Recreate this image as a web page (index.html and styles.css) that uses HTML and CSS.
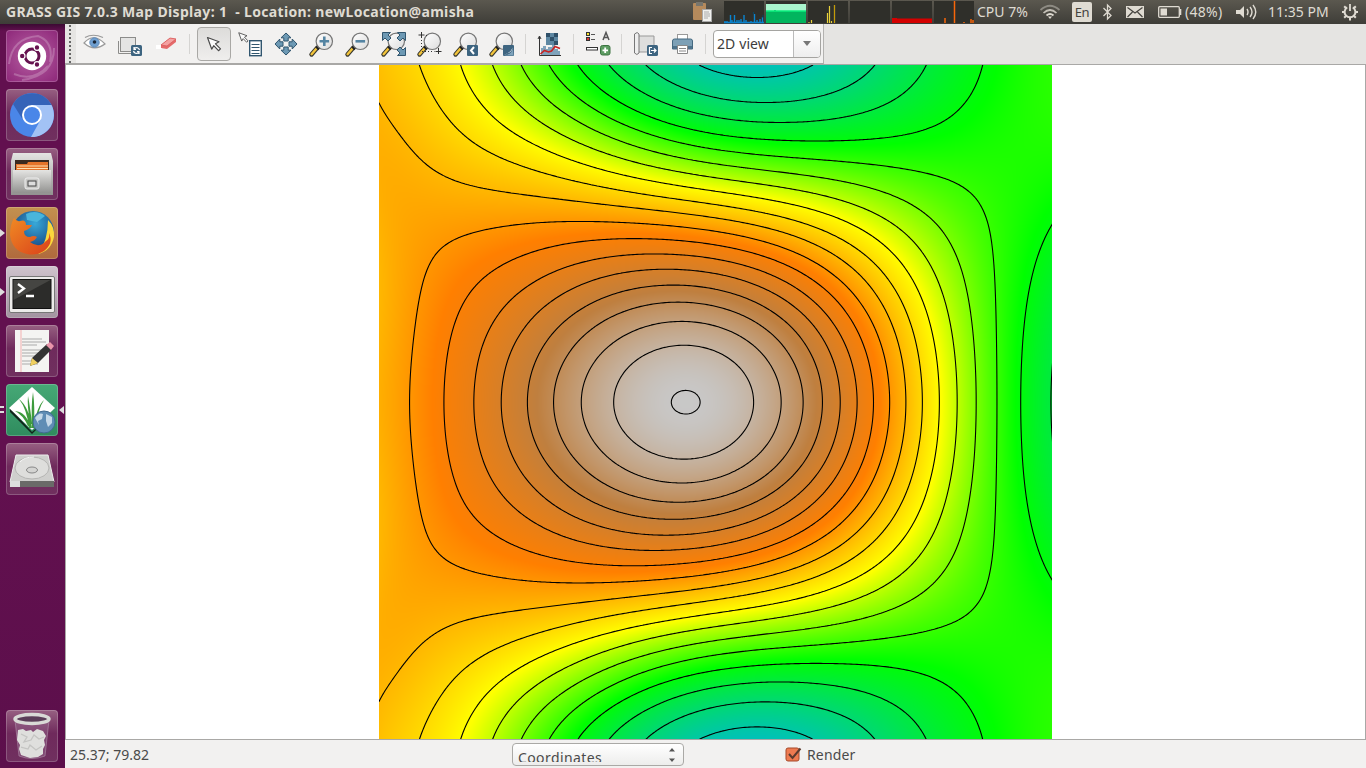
FILE: index.html
```html
<!DOCTYPE html>
<html lang="en">
<head>
<meta charset="utf-8">
<title>GRASS GIS 7.0.3 Map Display: 1</title>
<link rel="stylesheet" href="styles.css">
</head>
<body>
<svg width="0" height="0" class="defs">
  <defs>
    <linearGradient id="lens" x1="0" y1="0" x2="1" y2="1"><stop offset="0" stop-color="#fff"/><stop offset="1" stop-color="#dcdcdc"/></linearGradient>
    <linearGradient id="metal" x1="0" y1="0" x2="0" y2="1"><stop offset="0" stop-color="#e4e4e2"/><stop offset="1" stop-color="#929290"/></linearGradient>
    <radialGradient id="globe" cx=".55" cy=".3" r=".7"><stop offset="0" stop-color="#38a8d8"/><stop offset="1" stop-color="#123a78"/></radialGradient>
    <linearGradient id="fox" x1="0" y1="0" x2="1" y2="1"><stop offset="0" stop-color="#f08a24"/><stop offset="1" stop-color="#d9401a"/></linearGradient>
    <g id="mag">
      <path d="M13.5 21.5 L7.5 28.5" stroke="#3a3a30" stroke-width="4.4" stroke-linecap="round"/>
      <path d="M12.5 22.5 L7.6 28.2" stroke="#f3c43a" stroke-width="2.4" stroke-linecap="round"/>
      <path d="M12.8 22.8 L15.2 20.4" stroke="#222" stroke-width="4"/>
      <circle cx="20.3" cy="15.3" r="8.2" fill="url(#lens)" stroke="#777" stroke-width="1.2"/>
    </g>
    <path id="arr" d="M1 1 L12.5 5.2 L9 7.3 L14 12.4 L12 14.2 L7.2 9.2 L5.2 12.6 Z" fill="#fbfbfb" stroke="#4a4a4a" stroke-width="1.2" stroke-linejoin="round"/>
    <path id="up" d="M0 -11 L5 -6.2 H2.2 V-3 H-2.2 V-6.2 H-5 Z" fill="#6d99b4" stroke="#31566f" stroke-width="1"/>
  </defs>
</svg>

<header class="panel">
  <span class="title">GRASS GIS 7.0.3 Map Display: 1&nbsp; - Location: newLocation@amisha</span>
  <div class="tray">
    <svg class="clip" width="22" height="24"><rect x="0" y="3" width="13" height="17" rx="1" fill="#b58a5c"/><rect x="3" y="2" width="7" height="4" fill="#77756d"/><rect x="9.500" y="9.500" width="9" height="12" fill="#f1f1ee" stroke="#aaa"/><path d="M11 12h5M11 14h6M11 16h6M11 18h4" stroke="#aaa"/></svg>
    <svg class="graphs" width="250" height="24">
      <path d="M0 1h40v22h-40zM42 1h40v22h-40zM84 1h40v22h-40zM126 1h40v22h-40zM168 1h40v22h-40zM210 1h40v22h-40z" fill="#2f2f2a"/>
      <path d="M0 22.5h40M1 23v-2M3 23v-2M6.500 23v-8M10.500 23v-8M8 23v-3M13 23v-3M15 23v-3M17 23v-4M20 23v-8M22 23v-3M27 23v-2M30.500 23v-9M33 23v-3M36 23v-4M38.500 23v-6" stroke="#0a84cf" stroke-width="1.400"/>
      <path d="M29.500 12v2M39 15v3" stroke="#0b4560"/>
      <rect x="42" y="4" width="40" height="19" fill="#a9f5cd"/><path d="M42 11h8v-1h2v1h30v12h-40z" fill="#02b55e"/><path d="M42 11h40" stroke="#0cf07f" stroke-width="1.500"/>
      <path d="M85 23v-1M87.500 23v-3M103.500 23v-10M105.500 23v-17M107.500 23v-2M110.500 23v-18" stroke="#e8d23c" stroke-width="1.200"/><path d="M110.500 23v-18" stroke="#c49a08"/>
      <path d="M168 18h5v.6h35v4.400h-40z" fill="#d40000"/>
      <path d="M221 23v-5M230.500 23v-22M240 23v-1M247 23v-4M249 23v-3" stroke="#f7660a" stroke-width="1.500"/>
    </svg>
    <span class="cpu">CPU 7%</span>
    <svg class="wifi" width="22" height="24" fill="none" stroke-width="1.700"><path d="M1.500 10 Q11 1.500 20.500 10" stroke="#8e8b83"/><path d="M4.500 13 Q11 7 17.500 13" stroke="#c4c0b7"/><path d="M7.500 15.500 Q11 12.500 14.500 15.500" stroke="#dfdbd2"/><path d="M9 16.500h4l-2 2.500z" fill="#dfdbd2"/></svg>
    <span class="lang">En</span>
    <svg class="bt" width="12" height="24" fill="none" stroke="#dfdbd2" stroke-width="1.300"><path d="M1.500 8 L9 15.500 L5.500 19 V5 L9 8.500 L1.500 16"/></svg>
    <svg class="mail" width="18" height="24"><rect y="6" width="18" height="12" fill="#dfdbd2"/><path d="M1.500 7.500 L9 13 L16.500 7.500M1.500 17l5-5M16.500 17l-5-5" fill="none" stroke="#45433e" stroke-width="1.200"/></svg>
    <svg class="batt" width="25" height="24"><rect x=".7" y="6.700" width="20.600" height="10.600" rx="1" fill="none" stroke="#dfdbd2" stroke-width="1.300"/><rect x="2.500" y="8.500" width="6.500" height="7" fill="#dfdbd2"/><path d="M22.500 9v6" stroke="#dfdbd2" stroke-width="1.600"/></svg>
    <span class="pct">(48%)</span>
    <svg class="vol" width="21" height="24"><path d="M0 10h4l4-4v12l-4-4h-4z" fill="#dfdbd2"/><path d="M11 9q2 3 0 6M14 7q4 5 0 10M17 5q5.500 7 0 14" fill="none" stroke="#dfdbd2" stroke-width="1.400"/></svg>
    <span class="time">11:35 PM</span>
    <svg class="gear" width="18" height="24"><g fill="none" stroke="#dfdbd2"><path d="M6.200 7.300a5.400 5.400 0 1 0 5.600 0" stroke-width="2"/><path d="M9 4v7" stroke-width="1.800"/><path d="M9 17v3.500M1 12h3M14 12h3M3.200 17.800l2-2M14.800 17.800l-2-2M3.200 6.200l2 2M14.800 6.200l-2 2" stroke-width="2"/></g></svg>
  </div>
</header>

<div class="desktop">
  <nav class="launcher">
    <div class="tile dash"><svg viewBox="0 0 52 52"><path d="M3 34Q6 8 32 6Q48 12 44 32M8 44Q28 52 42 36M16 50Q48 46 48 18" fill="none" stroke="#fff" stroke-opacity=".22" stroke-width="2"/><circle cx="26" cy="26" r="14.200" fill="#fff"/><circle cx="26" cy="26" r="7" fill="none" stroke="#65124f" stroke-width="3"/><g fill="#65124f" stroke="#fff" stroke-width="1.200"><circle cx="16.200" cy="26" r="2.800"/><circle cx="31" cy="17.500" r="2.800"/><circle cx="31" cy="34.500" r="2.800"/></g></svg></div>
    <div class="tile glass"><svg viewBox="0 0 52 52"><circle cx="26" cy="26" r="22" fill="#4a86e8"/><path d="M7 15A22 22 0 0 1 45.500 16H26L17 31Z" fill="#3563b8"/><path d="M26 16h19.500A22 22 0 0 1 25 48L35 30Z" fill="#a2c2f5"/><circle cx="26" cy="26" r="10" fill="#fff"/><circle cx="26" cy="26" r="8" fill="#4a86e8"/></svg></div>
    <div class="tile glass"><svg viewBox="0 0 52 52"><path d="M7 5h38l2 8v34H5V13Z" fill="url(#metal)"/><path d="M9 12h34v11H9z" fill="#3b2a20"/><path d="M10 16h11l1-2h20v9H10z" fill="#e5742a"/><path d="M11 18h31M11 20.500h31" stroke="#ffe0b0" stroke-width="1.200"/><path d="M7 22h38v23H7z" fill="url(#metal)"/><rect x="19" y="30" width="14" height="11" rx="2" fill="#c9c9c7" stroke="#eee"/><rect x="22" y="33" width="8" height="5" fill="#ddd" stroke="#444"/></svg></div>
    <div class="tile firefox"><i class="run"></i><svg viewBox="0 0 52 52"><circle cx="27" cy="25" r="21" fill="url(#globe)"/><path d="M20 7Q30 2 39 9L31 15L21 13Z" fill="#49b5dc"/><path d="M42 13Q49 20 48 30Q45 44 32 47Q42 34 42 13Z" fill="#fbd83c"/><path d="M8 11Q11 15 14 14Q20 12 20 18L26 18Q24 22 18 24Q18 30 24 30Q28 28 31 30Q29 34 24 35Q33 42 40 34Q44 32 43 26Q48 36 38 44Q30 49 21 47Q6 44 4 28Q4 18 8 11Z" fill="url(#fox)"/></svg></div>
    <div class="tile term"><i class="run"></i><svg viewBox="0 0 52 52"><rect x="3.500" y="10.500" width="45" height="36" rx="1.500" fill="#ecebea" stroke="#777"/><rect x="7" y="13.500" width="38" height="29" fill="#2c2c2a" stroke="#111"/><path d="M7.500 14h37L7.500 34z" fill="#454542"/><path d="M12 18l6 4.500-6 4.500M20 30h8" fill="none" stroke="#fff" stroke-width="2.300"/></svg></div>
    <div class="tile glass"><svg viewBox="0 0 52 52"><path d="M9 5h34v42H9z" fill="#f4f4f2"/><path d="M15 5v42" stroke="#f3b0b0"/><path d="M16 14h20M16 17h24M16 20h15M16 25h22M16 28h18M16 31h20M16 36h14M16 39h16" stroke="#aaa"/><path d="M24 41l2-8 15-14 5 5-14 14z" fill="#333"/><path d="M24 41l2-8 6 5z" fill="#f0d060"/><path d="M40 20l4-3 4 4-3 4z" fill="#e995ab"/></svg></div>
    <div class="tile grass"><i class="run two"></i><i class="focus"></i><svg viewBox="0 0 52 52"><path d="M4 24l22 24 18-16-18 18L4 28z" fill="#10251b"/><path d="M26 3L49 24 26 46 3 24z" fill="#fff"/><path d="M26 44Q25 20 27 8Q29 22 28 44ZM23 44Q21 25 13 15Q23 23 26 44ZM28 42Q31 22 38 16Q32 25 30 42ZM22 42Q17 31 9 27Q20 28 24 42ZM24 40Q21 20 22 12Q24 22 26 40Z" fill="#3d9b3c"/><circle cx="38" cy="38" r="11" fill="#5f8db5" stroke="#406b90"/><path d="M29 34q4-6 8-4l-1 5-4 2 1 4zM40 30l6 3v6l-4 4-2-6z" fill="#c4d8e8"/></svg></div>
    <div class="tile glass"><svg viewBox="0 0 52 52"><path d="M10 12h32l6 27H4z" fill="#cfcfcd" stroke="#eee"/><ellipse cx="26" cy="25" rx="17" ry="11" fill="#dededc" stroke="#b5b5b3"/><path d="M14 19q4-5 14-5" fill="none" stroke="#f5f5f5"/><ellipse cx="26" cy="27" rx="5.500" ry="3" fill="#d4d4d2" stroke="#888"/><path d="M4 38h44v6H4z" fill="#6a6a68"/><path d="M4 38h10v6H4z" fill="#ddd"/></svg></div>
    <div class="tile glass trash"><svg viewBox="0 0 52 52"><path d="M9 10h34l-4 36q-13 5-26 0z" fill="#a987a5" fill-opacity=".3" stroke="#b9a0b6" stroke-opacity=".5"/><path d="M12 20l5-1 3 2 5-1 2 2 4-3 6 2 3 5-2 4 1 5-2 4v5l-5 3-8 1-9-3-2-6 1-4-3-5z" fill="#dfdfdd"/><path d="M15 24l6 3-3 5 7-2 3-5 5 4 5-2M15 37l7 2 2-4 6 5 6-4" fill="none" stroke="#c4c4c2" stroke-width="1.300"/><ellipse cx="26" cy="9" rx="17" ry="4.500" fill="#5b3e58" stroke="#d9dad6" stroke-width="3.500"/></svg></div>
  </nav>

  <main class="window">
    <div class="toolrow">
      <div class="toolbar">
        <span class="grip"></span>
        <svg class="tool"><path d="M8 17Q18 6 29 18Q18 26 8 17Z" fill="#fff" stroke="#9a9a9a" stroke-width="1.200"/><path d="M9 11.500Q17 7 27 11.500" fill="none" stroke="#999" stroke-width="1.200"/><circle cx="18.500" cy="16.500" r="4.700" fill="#6f9fd0" stroke="#5c88b8"/><circle cx="18.500" cy="16" r="1.800" fill="#1b2738"/></svg>
        <svg class="tool"><rect x="8.500" y="11.500" width="15" height="14" fill="#e4e4e3" stroke="#8c8c8a"/><path d="M6.500 15v12.500H20" fill="none" stroke="#8c8c8a"/><rect x="19" y="19" width="11" height="11" rx="1.500" fill="#3d6480"/><path d="M21.500 25a3 3 0 0 0 5 1.500M27.500 24a3 3 0 0 0-5-1.500M22 21v2.500h2M27 28v-2.500h-2" fill="none" stroke="#fff" stroke-width="1.200"/></svg>
        <svg class="tool"><path d="M8 19h6v4h-6z" fill="#fff"/><path d="M13 19l9-7 6 1v3l-9 7-6-1z" fill="#e56a6a"/><path d="M13 19l9-7 6 1-9 7z" fill="#f4a1a1" stroke="#d95b5b" stroke-width=".8"/></svg>
        <i class="sep"></i>
        <span class="tool pressed"><svg class="tool"><use href="#arr" x="10.500" y="10.500"/></svg></span>
        <svg class="tool"><use href="#arr" transform="translate(6 6) scale(.72)"/><rect x="17.700" y="14.700" width="11.600" height="15" fill="#fff" stroke="#31566f" stroke-width="1.400"/><path d="M19.500 18.500h8M19.500 21.500h8M19.500 24.500h8M19.500 27.500h8" stroke="#31566f"/></svg>
        <svg class="tool"><g transform="translate(18 18)"><use href="#up"/><use href="#up" transform="rotate(90)"/><use href="#up" transform="rotate(180)"/><use href="#up" transform="rotate(270)"/></g></svg>
        <svg class="tool"><use href="#mag"/><path d="M20.300 10.500v9.600M15.500 15.300h9.600" stroke="#5484a2" stroke-width="2.600"/></svg>
        <svg class="tool"><use href="#mag"/><path d="M15.500 15.300h9.600" stroke="#5484a2" stroke-width="2.600"/></svg>
        <svg class="tool"><use href="#mag"/><g fill="#6d99b4" stroke="#31566f"><path d="M6.500 6.500h8l-2.500 2.500 3 3-3 3-3-3-2.500 2.500z"/><path d="M29.500 6.500h-8l2.500 2.500-3 3 3 3 3-3 2.500 2.500z"/><path d="M29.500 29.500v-8l-2.500 2.500-3-3-3 3 3 3-2.500 2.500z"/></g></svg>
        <svg class="tool"><use href="#mag"/><path d="M9.500 6v6M6.500 9h6M26.500 22v6M23.500 25.500h6" stroke="#333"/><path d="M9.500 14v11.500h13M14 9.500h3" fill="none" stroke="#333" stroke-dasharray="1 2"/></svg>
        <svg class="tool"><use href="#mag"/><rect x="19" y="19" width="11" height="11" rx="1" fill="#3d6480"/><path d="M26 21l-3 3.500 3 3.500" fill="none" stroke="#fff" stroke-width="2"/></svg>
        <svg class="tool"><use href="#mag"/><rect x="19" y="19" width="11" height="11" rx="1" fill="#3d6480"/><path d="M20 29.500q8-.5 9-8.500l.5 8.500z" fill="#7fa3bb"/><path d="M19.500 29q6-1 9-7-1 4-4 5z" fill="#fff"/></svg>
        <i class="sep"></i>
        <svg class="tool"><path d="M14 7h12v12h-12z" fill="#5d87a2"/><path d="M14 7h4v4h-4zM22 7h4v4h-4zM18 11h4v4h-4zM22 15h4v4h-4z" fill="#2f5069"/><path d="M9 29v-7h2v-2h3v3h2v-2h4v-2h3v4h3v2h2v4z" fill="#7fa3bb"/><path d="M7.500 11v18.500H29M6 13l1.500-3 1.500 3" fill="none" stroke="#333"/><path d="M8.500 28l4-3.500 4 1.500 3-1 3.500-4.500 5 2" fill="none" stroke="#c62323" stroke-width="1.600"/></svg>
        <i class="sep"></i>
        <svg class="tool"><rect x="6.500" y="6.500" width="3" height="3" fill="#f5e02a" stroke="#333"/><rect x="6.500" y="11.500" width="3" height="3" fill="#d33" stroke="#333"/><path d="M11 8.500h4M11 13.500h4" stroke="#555"/><path d="M23 14l3-7.500 3 7.500M24 11.500h4" fill="none" stroke="#555" stroke-width="1.500"/><rect x="6.500" y="21.500" width="11" height="2.500" fill="#fff" stroke="#333"/><rect x="20.500" y="19.500" width="9.500" height="9.500" rx="2" fill="#5d9c62" stroke="#3c7541"/><path d="M25.200 21.500v5.500M22.500 24.300h5.500" stroke="#fff" stroke-width="1.800"/></svg>
        <i class="sep"></i>
        <svg class="tool"><path d="M10 10h16v16H10z" fill="#dededd" stroke="#999"/><path d="M6.500 8q3-3 4.500 0v19q-2 3-4.500 0z" fill="#eee" stroke="#777"/><rect x="19" y="19" width="11" height="11" rx="1.500" fill="#3d6480"/><path d="M24 21.500h-2.500v6h2.500M23 24.500h5M26 22.500l2 2-2 2" fill="none" stroke="#fff" stroke-width="1.200"/></svg>
        <svg class="tool"><rect x="13.500" y="8.500" width="10" height="6" fill="#fff" stroke="#999"/><path d="M8.500 15q0-2 2-2h16q2 0 2 2v8h-20z" fill="#7da0b6" stroke="#446980"/><path d="M9 20h19v3h-19z" fill="#4d728b"/><path d="M13.500 19.500h10v8h-10z" fill="#fff" stroke="#888"/><path d="M15 22.500h7M15 25h7" stroke="#888"/></svg>
        <i class="sep last"></i>
        <div class="combo"><span>2D view</span><b></b></div>
      </div>
    </div>
    <div class="viewport"><canvas id="map" width="673" height="674"></canvas></div>
    <footer class="status">
      <span class="coords">25.37; 79.82</span>
      <div class="choice"><span>Coordinates</span><svg width="8" height="16"><path d="M1 4.500l3-3.500 3 3.500zM1 11.500l3 3.500 3-3.500z" fill="#555"/></svg></div>
      <label class="render"><svg width="17" height="16"><rect x="1" y="2" width="13" height="13" rx="2" fill="#ee7a50" stroke="#a5492a"/><path d="M4 8l3.500 4L15.500 2.500" fill="none" stroke="#5b3a2e" stroke-width="2"/></svg>Render</label>
    </footer>
  </main>
</div>
<script src="map.js"></script>
</body>
</html>
```

FILE: styles.css
```css
* { box-sizing: border-box; }
body { margin: 0; width: 1366px; height: 768px; overflow: hidden; display: flex; flex-direction: column; font-family: "Noto Sans", "Open Sans", sans-serif; font-size: 14px; color: #4a4a4a; background: #f2f1f0; }
.defs { position: absolute; }
svg { display: block; flex: none; }

.panel { height: 24px; flex: none; display: flex; justify-content: space-between; background: linear-gradient(#5b584f, #3e3d38); color: #dfdbd2; line-height: 23px; padding-left: 6px; white-space: nowrap; }
.title { font-weight: 700; font-size: 14px; letter-spacing: .34px; }
.tray { display: flex; width: 674px; flex: none; }
.clip { margin-left: 1px; }
.graphs { margin-left: 9px; }
.cpu { width: 51px; margin-left: 3px; }
.wifi { margin-left: 11px; }
.lang { margin: 2px 0 0 11px; width: 20px; height: 20px; border-radius: 2px; background: #dfdbd2; color: #45433e; text-align: center; line-height: 20px; font-size: 13px; letter-spacing: -.5px; }
.bt { margin-left: 10px; }
.mail { margin-left: 12px; }
.batt { margin-left: 14px; }
.pct { width: 39px; margin-left: 2px; }
.vol { margin-left: 12px; }
.time { width: 61px; margin-left: 11px; }
.gear { margin-left: 12px; }
.cpu, .pct, .time { font-size: 14px; letter-spacing: 0; }
.pct { letter-spacing: .3px; }

.desktop { flex: 1; display: flex; min-height: 0; }
.launcher { width: 65px; flex: none; display: flex; flex-direction: column; gap: 7px; padding: 6px 0 6px 6px; background: linear-gradient(#3c0a33, #62104f 7px, #62104f 60%, #5c0f4b); }
.tile { position: relative; width: 52px; height: 52px; border-radius: 4px; flex: none; box-shadow: inset 0 0 0 1px rgba(255,255,255,.2); }
.dash { background: radial-gradient(#b861a4, #8c2678); }
.glass { background: linear-gradient(#976082, #6f2a5c 45%, #70305f); }
.firefox { background: linear-gradient(#c4914f, #b06a3d); }
.term { background: linear-gradient(#cfc3cd, #a293a0); }
.grass { background: linear-gradient(#46a876, #2f8c5e); }
.trash { margin-top: auto; }
.run { position: absolute; left: -6px; top: 22px; border: 4px solid transparent; border-left: 5px solid #ddd; border-right: 0; }
.two { border: 0; border-top: 2px solid #ddd; border-bottom: 2px solid #ddd; width: 4px; height: 7px; }
.focus { position: absolute; left: 53px; top: 22px; border: 4px solid transparent; border-right: 5px solid #ddd; border-left: 0; }

.window { flex: 1; display: flex; flex-direction: column; min-width: 0; }
.toolrow { height: 41px; flex: none; display: flex; background: #e5e4e2; border-bottom: 1px solid #a9a8a6; }
.toolbar { display: flex; align-items: center; width: 759px; background: #f2f1f0; border-right: 1px solid #b3b2b0; border-bottom: 1px solid #a9a8a6; }
.grip { width: 11px; height: 39px; background: radial-gradient(circle, #666 .8px, transparent 1.2px) 3px 4px / 4px 4px repeat-y #e6e5e3; }
.tool { width: 36px; height: 36px; flex: none; }
.pressed { display: grid; place-items: center; position: relative; }
.pressed::before { content: ""; position: absolute; inset: 1px; border: 1px solid #a9a8a5; border-radius: 4px; background: linear-gradient(#dddcda, #efeeed); }
.pressed svg { position: relative; }
.sep { width: 1px; height: 20px; background: #d5d4d2; margin: 0 6px 0 5px; }
.last { margin-right: 7px; }
.combo { width: 108px; height: 28px; display: flex; border: 1px solid #a5a4a1; border-radius: 4px; background: #fff; color: #3c3c3c; line-height: 26px; }
.combo span { flex: 1; padding-left: 3px; letter-spacing: .1px; }
.combo b { width: 27px; border-left: 1px solid #bbb; border-radius: 0 3px 3px 0; background: linear-gradient(#fff, #eee); display: grid; place-items: center; }
.combo b::before { content: ""; border: 4px solid transparent; border-top: 5px solid #777; border-bottom: 0; }

.viewport { height: 674px; flex: none; background: #fff; display: flex; justify-content: center; border: 0 solid #a9a8a6; border-width: 0 1px; }
#map { display: block; }
.status { flex: 1; display: flex; border-top: 1px solid #a9a8a6; padding-left: 5px; line-height: 30px; }
.coords { width: 442px; }
.choice { width: 172px; height: 23px; margin-top: 3px; border: 1px solid #aaa9a6; border-radius: 4px; background: linear-gradient(#fff, #ededec); display: flex; justify-content: space-between; padding: 3px 7px 0 5px; overflow: hidden; }
.choice span { line-height: 22px; height: 15px; overflow: hidden; letter-spacing: .4px; }
.render { display: flex; margin-left: 101px; gap: 5px; letter-spacing: .15px; }
.render svg { margin-top: 6px; }
```

FILE: map.js
```js
// Elevation surface with contour lines, mirrored about the row AXIS.
// A smooth polynomial-cosine surface is fitted to points of known level.
const X0 = 379, Y0 = 65, W = 673, H = 674, AXIS = 402;

// Points on each contour level: [level, x, y, x, y, ...].
const control = [
  [0, 755,77.5, 692,65, 816,65, 715,73.3],
  [1, 763,101, 643.5,65, 876.5,65, 715,96.5],
  [2, 780,121, 608.5,65, 928,65, 715,115.7, 1051.8,370, 1051,402],
  [3, 811,140.4, 985.5,65, 972,92, 955,110, 932,123.3, 898,133.3, 858,138.3, 1052,225, 1040,250, 1030,283, 1023.3,337, 1021,402, 578,65, 603,90.7, 637,109, 677,123.3, 715,133.2],
  [4, 549,65, 715,149.3, 798,159, 898,167.3, 932,173.3, 955,182.7, 973.3,196.7, 985,216.7, 991.7,246.7, 995,290, 996.5,402],
  [5, 521,65, 715,164, 848,186, 882,194, 915,209, 941.7,231.7, 961.7,266.7, 971.7,313, 976,402],
  [6, 491.5,65, 715,178, 957,402],
  [7, 458.5,65, 480,99.3, 510,129.3, 537,145.3, 583,162.7, 637,176, 715,191.5, 782,200, 832,213.3, 872,235, 902,263.3, 922,298, 933.5,337, 939.3,402],
  [8, 418.5,65, 437,98.3, 460,128.3, 487,149.3, 520,165, 570,179.3, 637,193.3, 715,205.2, 922,402],
  [9, 379,100.5, 385,112, 391,122, 403,140, 420,159, 437,173, 470,186.5, 520,196.8, 587,204.5, 653,211, 715,218.5, 906,402],
  [10, 410,402, 412.7,343, 418.3,297, 427,271.7, 440,253.3, 470,235, 503,227.3, 537,224, 583,222.6, 715,231.7, 889.5,402],
  [11, 445,402, 447.3,350, 455,318, 470,290, 503,261.7, 537,248.3, 577,241, 630,238.7, 715,245.3, 873.5,402],
  [12, 474.5,402, 652,253.3, 715,259.3, 857,402],
  [13, 501.5,402, 662,268.5, 715,273.5, 840.3,402],
  [14, 527.5,402, 668,284, 715,289, 822.5,402],
  [15, 553.5,402, 673,301, 715,306, 803.2,402],
  [16, 581.3,402, 677,320.2, 715,325, 781,402],
  [17, 613.7,402, 683,344.3, 715,350.3, 753.5,402],
  [18, 685,392, 674,402, 697,402],
  [3.8, 1052,65, 1052,85, 1051,105],
  [3.55, 1020,65],
  [3.7, 1052,130],
  [8.75, 379,65],
  [8.87, 379,82],
  [9.2, 379,140]
];

const DX = 10, DY = 4, M = DX * DY;
function basis(x, y) {
  const t = Math.acos(Math.max(-1, Math.min(1, (x - 715.5) / 340))), out = [];
  for (let k = 0; k < DY; k++) {
    const c = Math.cos(k * Math.PI * (y - AXIS) / 374);
    for (let i = 0; i < DX; i++) out.push(Math.cos(i * t) * c);
  }
  return out;
}

// Ridge-regularised normal equations, solved by elimination.
const A = [];
for (let i = 0; i < M; i++) {
  A.push(new Float64Array(M + 1));
  const k = Math.floor(i / DX), d = i % DX;
  A[i][i] = 1e-5 * (1 + d * d * d * d) * (1 + 10 * Math.max(0, k - 1));
}
for (const [level, ...c] of control) {
  for (let n = 0; n < c.length; n += 2) {
    const b = basis(c[n], c[n + 1]), wt = level > 16 ? 6 : 1;
    for (let i = 0; i < M; i++) {
      for (let j = 0; j < M; j++) A[i][j] += wt * b[i] * b[j];
      A[i][M] += wt * b[i] * level;
    }
  }
}
for (let i = 0; i < M; i++) {
  let p = i;
  for (let j = i + 1; j < M; j++) if (Math.abs(A[j][i]) > Math.abs(A[p][i])) p = j;
  [A[i], A[p]] = [A[p], A[i]];
  for (let j = i + 1; j < M; j++) {
    const f = A[j][i] / A[i][i];
    if (f) for (let k = i; k <= M; k++) A[j][k] -= f * A[i][k];
  }
}
const w = new Float64Array(M);
for (let i = M - 1; i >= 0; i--) {
  let s = A[i][M];
  for (let j = i + 1; j < M; j++) s -= A[i][j] * w[j];
  w[i] = s / A[i][i];
}
function height(x, y) {
  const b = basis(x, y);
  let s = 0;
  for (let i = 0; i < M; i++) s += w[i] * b[i];
  return s;
}

const STEP = 2, GX = Math.ceil(W / STEP) + 1, GY = Math.ceil(H / STEP) + 1;
const grid = [];
for (let j = 0; j < GY; j++) {
  const row = new Float64Array(GX);
  for (let i = 0; i < GX; i++) row[i] = height(X0 + i * STEP, Y0 + j * STEP);
  grid.push(row);
}
function sample(px, py) {
  const gx = px / STEP, gy = py / STEP;
  const i = Math.min(GX - 2, Math.floor(gx)), j = Math.min(GY - 2, Math.floor(gy)), a = gx - i, b = gy - j;
  return (grid[j][i] * (1 - a) + grid[j][i + 1] * a) * (1 - b) + (grid[j + 1][i] * (1 - a) + grid[j + 1][i + 1] * a) * b;
}

const ramp = [[0,191,191],[0,255,0],[255,255,0],[255,127,0],[191,127,63],[200,200,200]];
const ctx = document.getElementById('map').getContext('2d');
const img = ctx.createImageData(W, H);
for (let y = 0; y < H; y++) for (let x = 0; x < W; x++) {
  const t = Math.max(0, Math.min(4.9999, (sample(x, y) + .5) / 18.56 * 5)), k = Math.floor(t), f = t - k, o = (y * W + x) * 4;
  for (let c = 0; c < 3; c++) img.data[o + c] = ramp[k][c] * (1 - f) + ramp[k + 1][c] * f;
  img.data[o + 3] = 255;
}
ctx.putImageData(img, 0, 0);

// Marching squares.
ctx.strokeStyle = '#000';
ctx.lineWidth = 1.1;
ctx.lineCap = 'round';
ctx.beginPath();
for (let j = 0; j < GY - 1; j++) for (let i = 0; i < GX - 1; i++) {
  const P = [[i, j], [i + 1, j], [i + 1, j + 1], [i, j + 1]];
  const v = P.map(p => grid[p[1]][p[0]]);
  for (let L = Math.ceil(Math.min(...v)); L <= Math.max(...v); L++) {
    const hit = [];
    for (let e = 0; e < 4; e++) {
      const a = v[e], b = v[(e + 1) % 4];
      if ((a < L) !== (b < L)) {
        const t = (L - a) / (b - a), q = P[(e + 1) % 4];
        hit.push([(P[e][0] + (q[0] - P[e][0]) * t) * STEP, (P[e][1] + (q[1] - P[e][1]) * t) * STEP + .2]);
      }
    }
    for (let h = 0; h + 1 < hit.length; h += 2) { ctx.moveTo(...hit[h]); ctx.lineTo(...hit[h + 1]); }
  }
}
ctx.stroke();
```
